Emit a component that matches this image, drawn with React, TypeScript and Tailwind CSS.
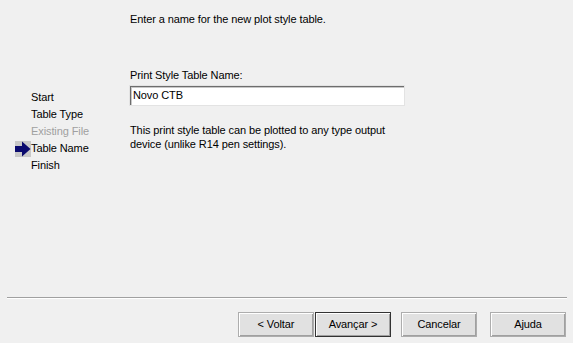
import React from 'react';

const steps = [
  { label: 'Start', state: 'done' },
  { label: 'Table Type', state: 'done' },
  { label: 'Existing File', state: 'disabled' },
  { label: 'Table Name', state: 'current' },
  { label: 'Finish', state: 'todo' },
];

const StepArrow = () => (
  <svg width="16" height="16" viewBox="0 0 16 16" className="block">
    <rect x="0" y="0" width="16" height="16" fill="#c8c8c8" />
    <path d="M0 5 H7 V0.5 L15.5 8 L7 15.5 V11 H0 Z" fill="#0a0a6e" />
  </svg>
);

const WizButton = ({ label, focused = false }: { label: string; focused?: boolean }) => (
  <button
    className={`h-[25px] w-[76px] bg-[#e1e1e1] text-[11px] text-black ${
      focused
        ? 'border border-[#333333] shadow-[inset_1px_1px_0_#ffffff,inset_-1px_-1px_0_#a0a0a0]'
        : 'border border-[#adadad] shadow-[inset_1px_1px_0_#ffffff,inset_-1px_-1px_0_#a0a0a0]'
    }`}
  >
    {label}
  </button>
);

export default function App() {
  return (
    <div
      className="w-[573px] h-[343px] bg-[#f0f0f0] relative overflow-hidden text-[11px] tracking-[-0.1px] text-black"
      style={{ fontFamily: '"Liberation Sans", Arial, sans-serif' }}
    >
      <div className="flex h-[297px]">
        {/* left step list */}
        <div className="w-[130px] pt-[89px] pl-[15px]">
          {steps.map((s) => (
            <div key={s.label} className="flex items-center h-[17px]">
              <div className="w-[16px] shrink-0">{s.state === 'current' && <StepArrow />}</div>
              <span className={s.state === 'disabled' ? 'text-[#a0a0a0]' : 'text-black'}>{s.label}</span>
            </div>
          ))}
        </div>

        {/* right pane */}
        <div className="flex-1 pt-[12px]">
          <div className="leading-[14px]">Enter a name for the new plot style table.</div>
          <div className="mt-[42px] leading-[14px]">Print Style Table Name:</div>
          <div className="mt-[3px] w-[276px] h-[21px] -ml-[1px] bg-white border border-[#e3e3e3] shadow-[inset_1px_1px_0_#6d6d6d,inset_2px_2px_0_#c8c8c8] flex items-center px-[3px]">
            Novo CTB
          </div>
          <div className="mt-[17px] leading-[14px] w-[272px]">
            This print style table can be plotted to any type output device (unlike R14 pen settings).
          </div>
        </div>
      </div>

      {/* separator */}
      <div className="mx-[7px] w-[560px] h-[2px] border-t border-[#a0a0a0] border-b border-b-white" />

      {/* buttons */}
      <div className="flex justify-end pr-[7px] mt-[13px]">
        <div className="flex">
          <WizButton label="< Voltar" />
          <div className="ml-[1px]">
            <WizButton label="Avançar >" focused />
          </div>
          <div className="ml-[10px]">
            <WizButton label="Cancelar" />
          </div>
          <div className="ml-[13px]">
            <WizButton label="Ajuda" />
          </div>
        </div>
      </div>
    </div>
  );
}
